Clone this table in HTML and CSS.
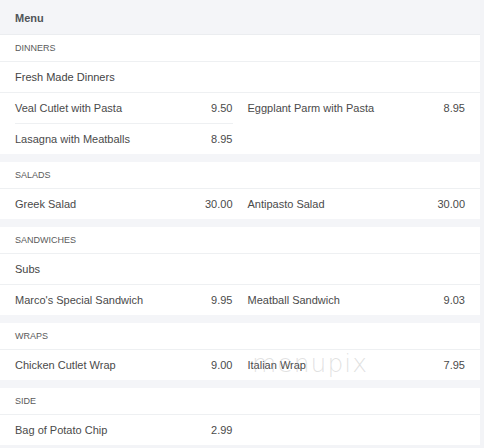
FILE: index.html
```html
<!DOCTYPE html>
<html>
<head>
<meta charset="utf-8">
<link rel="stylesheet" href="styles.css">
</head>
<body>
<div class="menu">
  <div class="menu-head">Menu</div>

  <section class="sec">
    <div class="sec-title">DINNERS</div>
    <div class="sub">Fresh Made Dinners</div>
    <div class="items">
      <div class="col">
        <div class="item"><span>Veal Cutlet with Pasta</span><span>9.50</span></div>
        <div class="item"><span>Lasagna with Meatballs</span><span>8.95</span></div>
      </div>
      <div class="col">
        <div class="item"><span>Eggplant Parm with Pasta</span><span>8.95</span></div>
      </div>
    </div>
  </section>

  <section class="sec">
    <div class="sec-title">SALADS</div>
    <div class="items">
      <div class="col">
        <div class="item"><span>Greek Salad</span><span>30.00</span></div>
      </div>
      <div class="col">
        <div class="item"><span>Antipasto Salad</span><span>30.00</span></div>
      </div>
    </div>
  </section>

  <section class="sec">
    <div class="sec-title">SANDWICHES</div>
    <div class="sub">Subs</div>
    <div class="items">
      <div class="col">
        <div class="item"><span>Marco's Special Sandwich</span><span>9.95</span></div>
      </div>
      <div class="col">
        <div class="item"><span>Meatball Sandwich</span><span>9.03</span></div>
      </div>
    </div>
  </section>

  <section class="sec">
    <div class="sec-title">WRAPS</div>
    <div class="items">
      <div class="col">
        <div class="item"><span>Chicken Cutlet Wrap</span><span>9.00</span></div>
      </div>
      <div class="col">
        <div class="item"><span>Italian Wrap</span><span>7.95</span></div>
      </div>
    </div>
  </section>

  <section class="sec">
    <div class="sec-title">SIDE</div>
    <div class="items">
      <div class="col">
        <div class="item"><span>Bag of Potato Chip</span><span>2.99</span></div>
      </div>
      <div class="col"></div>
    </div>
  </section>

  <div class="watermark">menupix</div>
</div>
</body>
</html>
```
FILE: styles.css
```css
html, body {
  margin: 0;
  padding: 0;
}
body {
  background: #f3f4f7;
  font-family: "Liberation Sans", Arial, sans-serif;
  color: #4d4d4d;
  width: 484px;
  height: 448px;
  overflow: hidden;
}
.menu {
  position: relative;
  width: 480px;
  background: #f4f5f8;
}
.menu-head {
  height: 34px;
  line-height: 36px;
  padding: 0 15px;
  font-size: 11px;
  font-weight: bold;
  color: #505458;
  background: #f4f5f8;
  border-bottom: 1px solid #ebedf0;
}
.sec {
  background: #fff;
  margin-bottom: 8px;
}
.sec-title {
  height: 26px;
  line-height: 26px;
  padding: 0 15px;
  font-size: 9px;
  color: #5a5a5a;
  border-bottom: 1px solid #eef0f2;
}
.sub {
  height: 30px;
  line-height: 30px;
  padding: 0 15px;
  font-size: 11px;
  color: #444;
  border-bottom: 1px solid #eef0f2;
}
.items {
  display: grid;
  grid-template-columns: 1fr 1fr;
  column-gap: 15px;
  padding: 0 15px;
}
.col {
  display: flex;
  flex-direction: column;
}
.item {
  display: flex;
  justify-content: space-between;
  align-items: center;
  height: 30px;
  font-size: 11px;
  color: #4a4a4a;
}
.item + .item {
  border-top: 1px solid #eef0f2;
}
.watermark {
  position: absolute;
  left: 252px;
  top: 349px;
  font-family: "DejaVu Sans", sans-serif;
  font-size: 25px;
  font-weight: 200;
  letter-spacing: 1px;
  color: rgba(170, 170, 170, 0.35);
  pointer-events: none;
}
```
